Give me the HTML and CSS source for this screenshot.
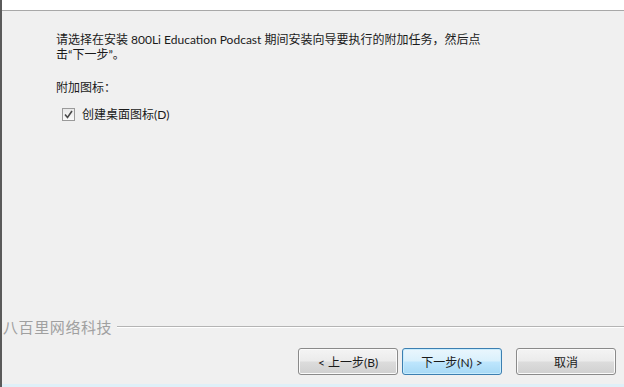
FILE: index.html
```html
<!DOCTYPE html>
<html lang="zh-CN">
<head>
<meta charset="utf-8">
<link rel="stylesheet" href="styles.css">
</head>
<body>
<div class="window">
  <div class="header"></div>
  <div class="main">
    <p class="intro">请选择在安装 800Li Education Podcast 期间安装向导要执行的附加任务，然后点击“下一步”。</p>
    <p class="group">附加图标：</p>
    <label class="check">
      <span class="box"><svg width="11" height="11" viewBox="0 0 11 11"><path d="M2 5.5 L4.5 8.5 L9 2" fill="none" stroke="#4a4a4a" stroke-width="1.6"/></svg></span>
      <span>创建桌面图标(D)</span>
    </label>
  </div>
  <div class="brand">
    <span class="brand-name">八百里网络科技</span>
    <span class="brand-line"></span>
  </div>
  <div class="buttons">
    <button class="btn">&lt; 上一步(B)</button>
    <button class="btn btn-default">下一步(N) &gt;</button>
    <button class="btn btn-cancel">取消</button>
  </div>
  <div class="bottom-strip"></div>
</div>
</body>
</html>
```
FILE: styles.css
```css
* { box-sizing: border-box; }
html, body { margin: 0; padding: 0; }
body {
  background: #f0f0f0;
  font-family: Lato, "Noto Sans CJK SC", sans-serif;
  font-size: 12px;
  color: #1a1a1a;
}
.window {
  width: 624px;
  height: 387px;
  display: flex;
  flex-direction: column;
  border-left: 2px solid #5a5a5a;
  background: #f0f0f0;
}
.header {
  height: 11px;
  background: #fff;
  border-bottom: 1px solid #a8a8a8;
  flex: none;
}
.main {
  flex: 1;
  padding: 21px 0 0 54px;
}
.intro {
  margin: 0;
  width: 430px;
  line-height: 15px;
}
.group {
  margin: 18px 0 0;
  line-height: 15px;
}
.check {
  display: flex;
  align-items: center;
  gap: 7px;
  margin: 12px 0 0 6px;
  line-height: 15px;
}
.box {
  width: 13px;
  height: 13px;
  border: 1px solid #9a9a9a;
  background: linear-gradient(#e8e8e8, #fafafa);
  display: flex;
  align-items: center;
  justify-content: center;
}
.box svg { display: block; }
.brand {
  display: flex;
  align-items: center;
  gap: 5px;
  height: 16px;
  padding-left: 1px;
  flex: none;
}
.brand-name {
  color: #a0a0a0;
  font-size: 15px;
  letter-spacing: 0.6px;
  line-height: 16px;
}
.brand-line {
  flex: 1;
  height: 1px;
  background: #b4b4b4;
  border-bottom: 1px solid #fff;
  box-sizing: content-box;
}
.buttons {
  display: flex;
  justify-content: flex-end;
  gap: 4px;
  padding: 13px 8px 0 0;
  height: 49px;
  flex: none;
}
.btn {
  width: 100px;
  height: 27px;
  font-family: inherit;
  font-size: 12px;
  color: #1a1a1a;
  border: 1px solid #8a8a8a;
  border-radius: 3px;
  background: linear-gradient(#f4f4f4 0%, #ebebeb 48%, #dcdcdc 52%, #d0d0d0 100%);
  box-shadow: inset 0 0 0 1px #fbfbfb;
  padding: 0;
}
.btn-default {
  border-color: #3c7fb1;
  background: linear-gradient(#eaf6fd 0%, #d9f0fc 48%, #bee6fd 52%, #a7d9f5 100%);
  box-shadow: inset 0 0 0 1px #c8ecfd;
}
.btn-cancel { margin-left: 10px; }
.bottom-strip {
  height: 3px;
  background: #dff0f8;
  flex: none;
}
```
